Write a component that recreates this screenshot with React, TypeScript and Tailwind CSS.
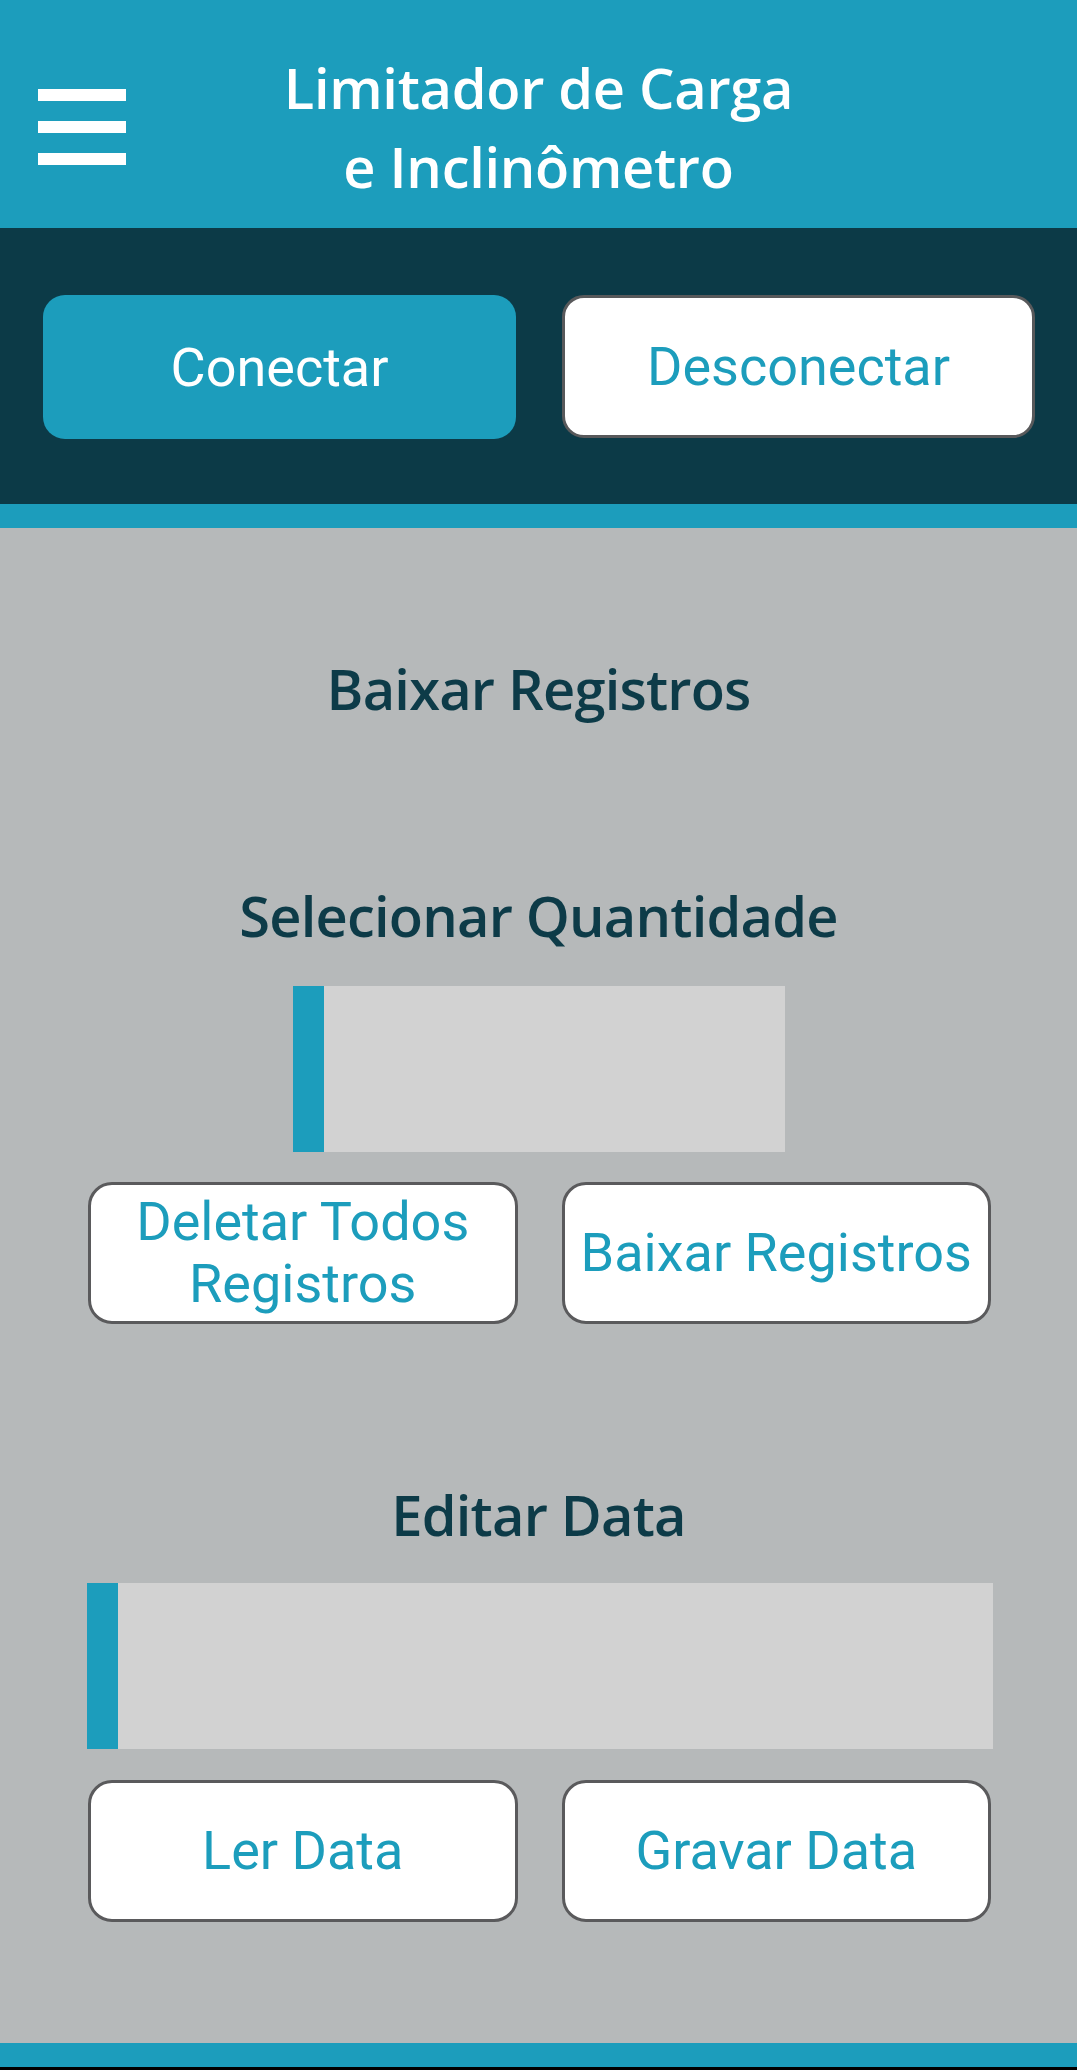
import React from 'react';

const OutlineButton: React.FC<{ children: React.ReactNode }> = ({ children }) => (
  <button className="flex h-[142px] items-center justify-center rounded-[24px] border-[3px] border-[#5a5a5c] bg-white px-2 text-center font-['Roboto',sans-serif] text-[54px] leading-[62px] text-[#1c9dbc]">
    {children}
  </button>
);

const SectionTitle: React.FC<{ children: React.ReactNode; className?: string }> = ({ children, className }) => (
  <h2 className={`text-center font-['Open_Sans',sans-serif] text-[56px] font-semibold leading-[76px] tracking-[-0.8px] text-[#0d3b48] ${className ?? ''}`}>
    {children}
  </h2>
);

const InputBox: React.FC<{ className?: string }> = ({ className }) => (
  <div className={`flex h-[166px] bg-[#d2d2d2] ${className ?? ''}`}>
    <div className="w-[31px] bg-[#1c9dbc]" />
  </div>
);

export default function App() {
  return (
    <div className="flex h-[2070px] w-[1077px] flex-col bg-[#b6b9ba]">
      {/* header */}
      <header className="grid h-[228px] grid-cols-[1fr_auto_1fr] bg-[#1c9dbc]">
        <div className="flex flex-col gap-[20px] pl-[38px] pt-[89px]">
          <span className="h-[12px] w-[88px] bg-white" />
          <span className="h-[12px] w-[88px] bg-white" />
          <span className="h-[12px] w-[88px] bg-white" />
        </div>
        <h1 className="pt-[48px] text-center font-['Open_Sans',sans-serif] text-[56px] font-semibold leading-[79px] tracking-[-0.3px] text-white">
          Limitador de Carga
          <br />e Inclinômetro
        </h1>
        <div />
      </header>

      {/* connection bar */}
      <div className="grid h-[276px] grid-cols-2 gap-[46px] bg-[#0c3a47] pl-[43px] pr-[42px] pt-[67px]">
        <button className="h-[144px] rounded-[22px] bg-[#1c9dbc] font-['Roboto',sans-serif] text-[54px] text-white">
          Conectar
        </button>
        <button className="h-[143px] rounded-[22px] border-[3px] border-[#58595b] bg-white font-['Roboto',sans-serif] text-[54px] text-[#1c9dbc]">
          Desconectar
        </button>
      </div>
      <div className="h-[24px] bg-[#1c9dbc]" />

      {/* content */}
      <main className="flex flex-1 flex-col">
        <SectionTitle className="mt-[122px]">Baixar Registros</SectionTitle>
        <SectionTitle className="mt-[151px]">Selecionar Quantidade</SectionTitle>
        <InputBox className="mx-auto mt-[33px] w-[492px]" />
        <div className="ml-[88px] mr-[86px] mt-[30px] grid grid-cols-2 gap-[44px]">
          <OutlineButton>
            Deletar Todos
            <br />
            Registros
          </OutlineButton>
          <OutlineButton>Baixar Registros</OutlineButton>
        </div>

        <SectionTitle className="mt-[152px]">Editar Data</SectionTitle>
        <InputBox className="ml-[87px] mr-[84px] mt-[31px]" />
        <div className="ml-[88px] mr-[86px] mt-[31px] grid grid-cols-2 gap-[44px]">
          <OutlineButton>Ler Data</OutlineButton>
          <OutlineButton>Gravar Data</OutlineButton>
        </div>
      </main>

      <footer className="h-[24px] bg-[#1c9dbc]" />
      <div className="h-[3px] bg-black" />
    </div>
  );
}
